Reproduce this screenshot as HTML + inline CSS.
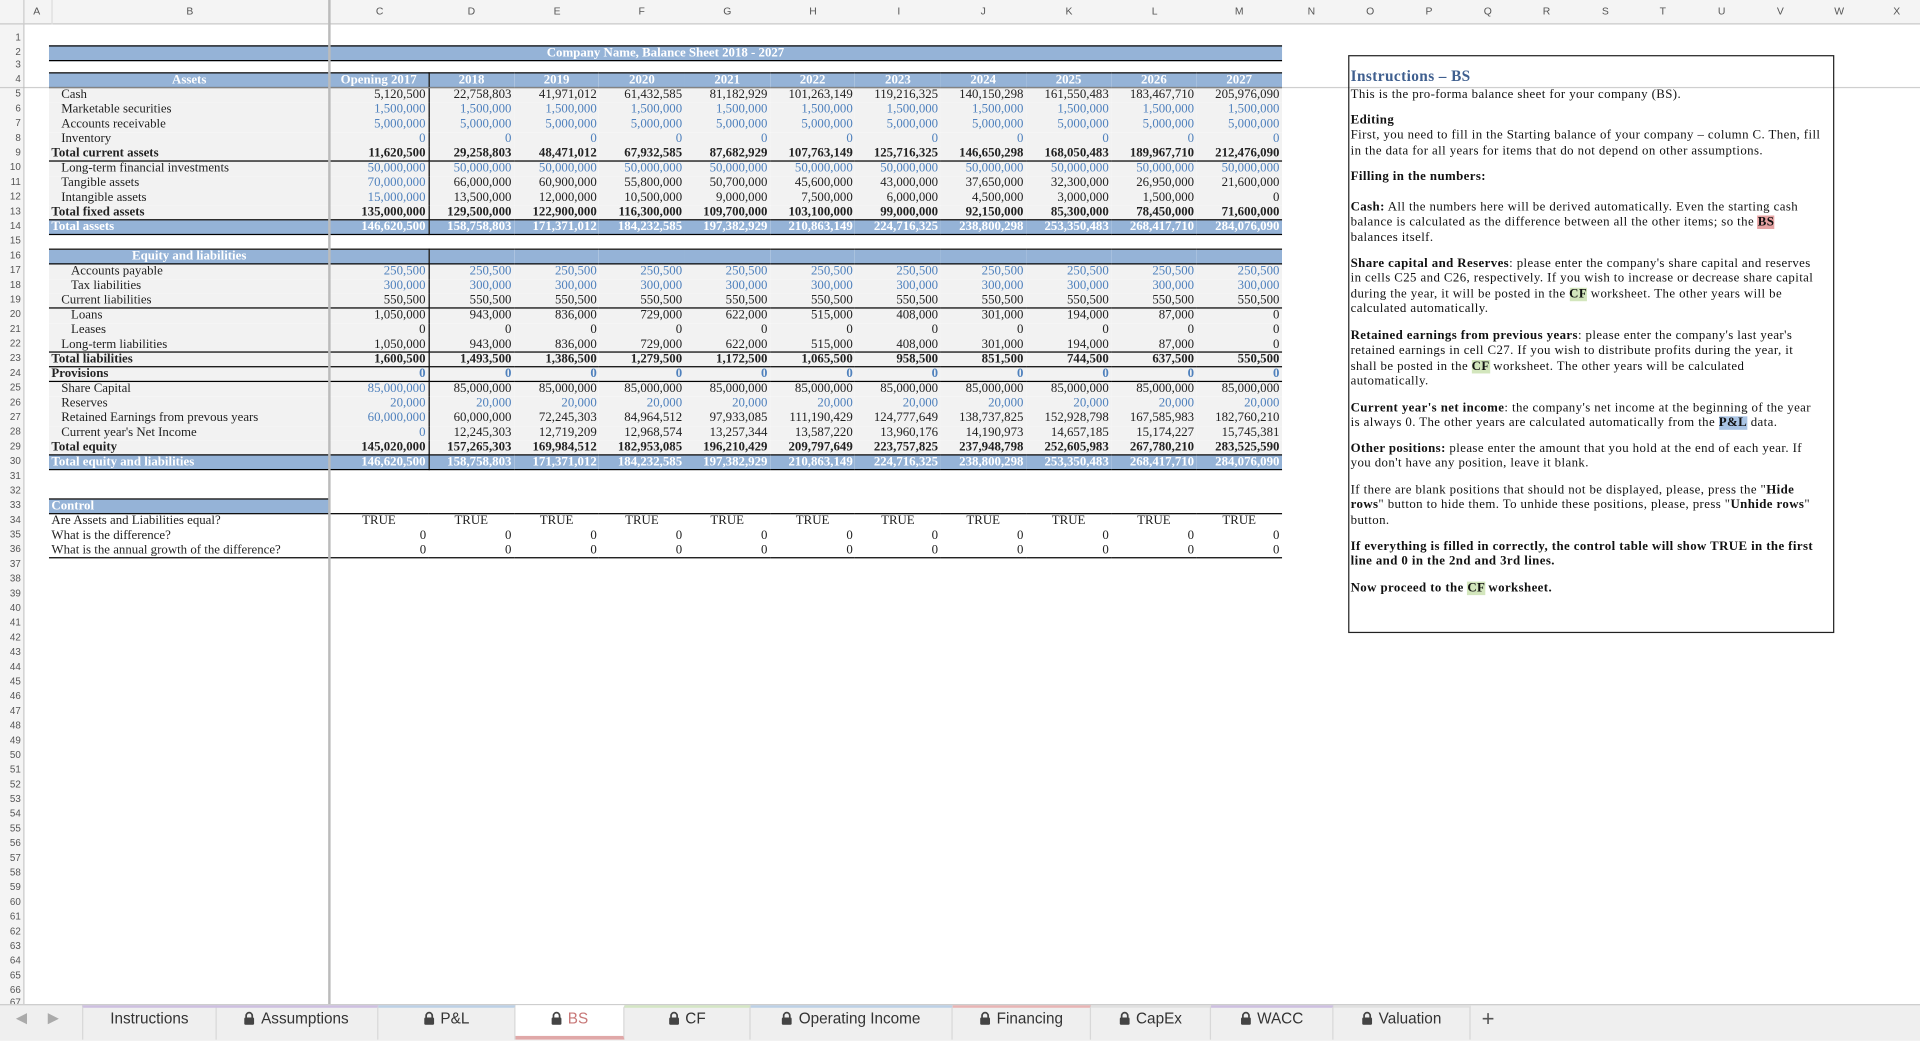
<!DOCTYPE html>
<html><head><meta charset="utf-8">
<style>
html,body{margin:0;padding:0;width:1920px;height:1039px;overflow:hidden;background:#fff}
#w{position:absolute;left:0;top:0;width:1568px;height:849px;transform:scale(1.22449);transform-origin:0 0;font-family:"Liberation Serif",serif;color:#222}
.ab{position:absolute}
#ch{left:0;top:0;width:1568px;height:19px;background:#f4f4f4;border-bottom:1px solid #c8c8c8;font:8.5px "Liberation Sans",sans-serif;color:#555;z-index:2}
#ch span{position:absolute;top:4px;transform:translateX(-50%)}
#rh{left:0;top:0;width:19px;height:820px;background:#f4f4f4;border-right:1px solid #c8c8c8;font:8px "Liberation Sans",sans-serif;color:#555}
#rh span{position:absolute;left:0;width:17px;text-align:right}
table{position:absolute;left:40px;top:59px;border-collapse:collapse;table-layout:fixed;font-size:10.5px}
tr{height:12px}
td{box-sizing:border-box;height:12px;padding:0 2px;line-height:11px;white-space:nowrap;overflow:hidden;text-align:right}
td:first-child{text-align:left}
tr.d td{background:#f2f2f2}
tr.h td{background:#95b3d7;color:#fff;font-weight:bold;text-align:center}
tr.band td{background:#95b3d7;color:#fff;font-weight:bold}
tr.t td{font-weight:bold}
tr.bb td{border-bottom:1px solid #000}
tr.bt td{border-top:1px solid #000}
td.c{border-right:1px solid #000}
.b{color:#4f81bd}
.i1{padding-left:10px!important}.i2{padding-left:18px!important}
tr.e td{background:transparent}
#ins{left:1101px;top:45px;width:395px;height:470px;border:1.5px solid #222;font-size:10.5px;letter-spacing:0.33px;line-height:12.3px;color:#111}
#ins p{margin:0;position:absolute;left:1px;white-space:nowrap}
.g{background:#d3e6bd}.r{background:#e6a3a3}.bl{background:#a9c4e4}
#tabs{left:0;top:820px;width:1568px;height:29px;background:#efefef;border-top:1px solid #ccc;font:12.5px "Liberation Sans",sans-serif;color:#333}
.tab{position:absolute;top:0;height:26px;line-height:19px;text-align:center;border-right:1px solid #d8d8d8;border-top:2px solid}
.tab svg{vertical-align:-1px;margin-right:5px}
</style></head><body><div id="w">
<div id="rh" class="ab">
<span style="top:26px">1</span><span style="top:38px">2</span><span style="top:48px">3</span><span style="top:60px">4</span><span style="top:72px">5</span><span style="top:84px">6</span><span style="top:96px">7</span><span style="top:108px">8</span><span style="top:120px">9</span><span style="top:132px">10</span><span style="top:144px">11</span><span style="top:156px">12</span><span style="top:168px">13</span><span style="top:180px">14</span><span style="top:192px">15</span><span style="top:204px">16</span><span style="top:216px">17</span><span style="top:228px">18</span><span style="top:240px">19</span><span style="top:252px">20</span><span style="top:264px">21</span><span style="top:276px">22</span><span style="top:288px">23</span><span style="top:300px">24</span><span style="top:312px">25</span><span style="top:324px">26</span><span style="top:336px">27</span><span style="top:348px">28</span><span style="top:360px">29</span><span style="top:372px">30</span><span style="top:384px">31</span><span style="top:396px">32</span><span style="top:408px">33</span><span style="top:420px">34</span><span style="top:432px">35</span><span style="top:444px">36</span><span style="top:456px">37</span><span style="top:468px">38</span><span style="top:480px">39</span><span style="top:492px">40</span><span style="top:504px">41</span><span style="top:516px">42</span><span style="top:528px">43</span><span style="top:540px">44</span><span style="top:552px">45</span><span style="top:564px">46</span><span style="top:576px">47</span><span style="top:588px">48</span><span style="top:600px">49</span><span style="top:612px">50</span><span style="top:624px">51</span><span style="top:636px">52</span><span style="top:648px">53</span><span style="top:660px">54</span><span style="top:672px">55</span><span style="top:684px">56</span><span style="top:696px">57</span><span style="top:708px">58</span><span style="top:720px">59</span><span style="top:732px">60</span><span style="top:744px">61</span><span style="top:756px">62</span><span style="top:768px">63</span><span style="top:780px">64</span><span style="top:792px">65</span><span style="top:804px">66</span><span style="top:814px">67</span>
</div>
<div id="ch" class="ab">
<span style="left:30px">A</span><span style="left:155px">B</span><span style="left:310px">C</span><span style="left:385px">D</span><span style="left:455px">E</span><span style="left:524px">F</span><span style="left:594px">G</span><span style="left:664px">H</span><span style="left:734px">I</span><span style="left:803px">J</span><span style="left:873px">K</span><span style="left:943px">L</span><span style="left:1012px">M</span><span style="left:1071px">N</span><span style="left:1119px">O</span><span style="left:1167px">P</span><span style="left:1215px">Q</span><span style="left:1263px">R</span><span style="left:1311px">S</span><span style="left:1358px">T</span><span style="left:1406px">U</span><span style="left:1454px">V</span><span style="left:1502px">W</span><span style="left:1549px">X</span>
</div>
<div class="ab" style="left:19px;top:0;width:1px;height:20px;background:#ccc;z-index:3"></div>
<div class="ab" style="left:42px;top:0;width:1px;height:20px;background:#ddd;z-index:3"></div>
<div class="ab" style="left:268px;top:0;width:2px;height:820px;background:#bbb;z-index:3"></div>
<div class="ab" style="left:40px;top:37px;width:1007px;height:11px;background:#95b3d7;border-top:1px solid #000;border-bottom:1px solid #000;color:#fff;font-weight:bold;font-size:10.5px;line-height:11px;text-align:center">Company Name, Balance Sheet 2018 - 2027</div>
<table>
<colgroup><col style="width:229px"><col style="width:81px"><col style="width:69.7px"><col style="width:69.7px"><col style="width:69.7px"><col style="width:69.7px"><col style="width:69.7px"><col style="width:69.7px"><col style="width:69.7px"><col style="width:69.7px"><col style="width:69.7px"><col style="width:69.7px"></colgroup>
<tr class="h bt bb"><td style="text-align:center">Assets</td><td class="c">Opening 2017</td><td>2018</td><td>2019</td><td>2020</td><td>2021</td><td>2022</td><td>2023</td><td>2024</td><td>2025</td><td>2026</td><td>2027</td></tr>
<tr class="d"><td class="i1">Cash</td><td class="c">5,120,500</td><td>22,758,803</td><td>41,971,012</td><td>61,432,585</td><td>81,182,929</td><td>101,263,149</td><td>119,216,325</td><td>140,150,298</td><td>161,550,483</td><td>183,467,710</td><td>205,976,090</td></tr>
<tr class="d b"><td class="i1" style="color:#222">Marketable securities</td><td class="c">1,500,000</td><td>1,500,000</td><td>1,500,000</td><td>1,500,000</td><td>1,500,000</td><td>1,500,000</td><td>1,500,000</td><td>1,500,000</td><td>1,500,000</td><td>1,500,000</td><td>1,500,000</td></tr>
<tr class="d b"><td class="i1" style="color:#222">Accounts receivable</td><td class="c">5,000,000</td><td>5,000,000</td><td>5,000,000</td><td>5,000,000</td><td>5,000,000</td><td>5,000,000</td><td>5,000,000</td><td>5,000,000</td><td>5,000,000</td><td>5,000,000</td><td>5,000,000</td></tr>
<tr class="d b"><td class="i1" style="color:#222">Inventory</td><td class="c">0</td><td>0</td><td>0</td><td>0</td><td>0</td><td>0</td><td>0</td><td>0</td><td>0</td><td>0</td><td>0</td></tr>
<tr class="d t bb"><td>Total current assets</td><td class="c">11,620,500</td><td>29,258,803</td><td>48,471,012</td><td>67,932,585</td><td>87,682,929</td><td>107,763,149</td><td>125,716,325</td><td>146,650,298</td><td>168,050,483</td><td>189,967,710</td><td>212,476,090</td></tr>
<tr class="d b"><td class="i1" style="color:#222">Long-term financial investments</td><td class="c">50,000,000</td><td>50,000,000</td><td>50,000,000</td><td>50,000,000</td><td>50,000,000</td><td>50,000,000</td><td>50,000,000</td><td>50,000,000</td><td>50,000,000</td><td>50,000,000</td><td>50,000,000</td></tr>
<tr class="d"><td class="i1">Tangible assets</td><td class="c b">70,000,000</td><td>66,000,000</td><td>60,900,000</td><td>55,800,000</td><td>50,700,000</td><td>45,600,000</td><td>43,000,000</td><td>37,650,000</td><td>32,300,000</td><td>26,950,000</td><td>21,600,000</td></tr>
<tr class="d"><td class="i1">Intangible assets</td><td class="c b">15,000,000</td><td>13,500,000</td><td>12,000,000</td><td>10,500,000</td><td>9,000,000</td><td>7,500,000</td><td>6,000,000</td><td>4,500,000</td><td>3,000,000</td><td>1,500,000</td><td>0</td></tr>
<tr class="d t bb"><td>Total fixed assets</td><td class="c">135,000,000</td><td>129,500,000</td><td>122,900,000</td><td>116,300,000</td><td>109,700,000</td><td>103,100,000</td><td>99,000,000</td><td>92,150,000</td><td>85,300,000</td><td>78,450,000</td><td>71,600,000</td></tr>
<tr class="band bb"><td>Total assets</td><td class="c">146,620,500</td><td>158,758,803</td><td>171,371,012</td><td>184,232,585</td><td>197,382,929</td><td>210,863,149</td><td>224,716,325</td><td>238,800,298</td><td>253,350,483</td><td>268,417,710</td><td>284,076,090</td></tr>
<tr class="e bb"><td colspan="12"></td></tr>
<tr class="h bb"><td>Equity and liabilities</td><td class="c"></td><td></td><td></td><td></td><td></td><td></td><td></td><td></td><td></td><td></td><td></td></tr>
<tr class="d b"><td class="i2" style="color:#222">Accounts payable</td><td class="c">250,500</td><td>250,500</td><td>250,500</td><td>250,500</td><td>250,500</td><td>250,500</td><td>250,500</td><td>250,500</td><td>250,500</td><td>250,500</td><td>250,500</td></tr>
<tr class="d b"><td class="i2" style="color:#222">Tax liabilities</td><td class="c">300,000</td><td>300,000</td><td>300,000</td><td>300,000</td><td>300,000</td><td>300,000</td><td>300,000</td><td>300,000</td><td>300,000</td><td>300,000</td><td>300,000</td></tr>
<tr class="d bb"><td class="i1">Current liabilities</td><td class="c">550,500</td><td>550,500</td><td>550,500</td><td>550,500</td><td>550,500</td><td>550,500</td><td>550,500</td><td>550,500</td><td>550,500</td><td>550,500</td><td>550,500</td></tr>
<tr class="d"><td class="i2">Loans</td><td class="c">1,050,000</td><td>943,000</td><td>836,000</td><td>729,000</td><td>622,000</td><td>515,000</td><td>408,000</td><td>301,000</td><td>194,000</td><td>87,000</td><td>0</td></tr>
<tr class="d"><td class="i2">Leases</td><td class="c">0</td><td>0</td><td>0</td><td>0</td><td>0</td><td>0</td><td>0</td><td>0</td><td>0</td><td>0</td><td>0</td></tr>
<tr class="d bb"><td class="i1">Long-term liabilities</td><td class="c">1,050,000</td><td>943,000</td><td>836,000</td><td>729,000</td><td>622,000</td><td>515,000</td><td>408,000</td><td>301,000</td><td>194,000</td><td>87,000</td><td>0</td></tr>
<tr class="d t bb"><td>Total liabilities</td><td class="c">1,600,500</td><td>1,493,500</td><td>1,386,500</td><td>1,279,500</td><td>1,172,500</td><td>1,065,500</td><td>958,500</td><td>851,500</td><td>744,500</td><td>637,500</td><td>550,500</td></tr>
<tr class="d t bb b"><td style="color:#222">Provisions</td><td class="c">0</td><td>0</td><td>0</td><td>0</td><td>0</td><td>0</td><td>0</td><td>0</td><td>0</td><td>0</td><td>0</td></tr>
<tr class="d"><td class="i1">Share Capital</td><td class="c b">85,000,000</td><td>85,000,000</td><td>85,000,000</td><td>85,000,000</td><td>85,000,000</td><td>85,000,000</td><td>85,000,000</td><td>85,000,000</td><td>85,000,000</td><td>85,000,000</td><td>85,000,000</td></tr>
<tr class="d b"><td class="i1" style="color:#222">Reserves</td><td class="c">20,000</td><td>20,000</td><td>20,000</td><td>20,000</td><td>20,000</td><td>20,000</td><td>20,000</td><td>20,000</td><td>20,000</td><td>20,000</td><td>20,000</td></tr>
<tr class="d"><td class="i1">Retained Earnings from prevous years</td><td class="c b">60,000,000</td><td>60,000,000</td><td>72,245,303</td><td>84,964,512</td><td>97,933,085</td><td>111,190,429</td><td>124,777,649</td><td>138,737,825</td><td>152,928,798</td><td>167,585,983</td><td>182,760,210</td></tr>
<tr class="d"><td class="i1">Current year's Net Income</td><td class="c b">0</td><td>12,245,303</td><td>12,719,209</td><td>12,968,574</td><td>13,257,344</td><td>13,587,220</td><td>13,960,176</td><td>14,190,973</td><td>14,657,185</td><td>15,174,227</td><td>15,745,381</td></tr>
<tr class="d t bb"><td>Total equity</td><td class="c">145,020,000</td><td>157,265,303</td><td>169,984,512</td><td>182,953,085</td><td>196,210,429</td><td>209,797,649</td><td>223,757,825</td><td>237,948,798</td><td>252,605,983</td><td>267,780,210</td><td>283,525,590</td></tr>
<tr class="band bb"><td>Total equity and liabilities</td><td class="c">146,620,500</td><td>158,758,803</td><td>171,371,012</td><td>184,232,585</td><td>197,382,929</td><td>210,863,149</td><td>224,716,325</td><td>238,800,298</td><td>253,350,483</td><td>268,417,710</td><td>284,076,090</td></tr>
<tr class="e"><td colspan="12"></td></tr>
<tr class="e"><td colspan="12"></td></tr>
<tr class="e bb"><td style="background:#95b3d7;color:#fff;font-weight:bold;border-top:1px solid #000">Control</td><td colspan="11"></td></tr>
<tr><td>Are Assets and Liabilities equal?</td><td style="text-align:center">TRUE</td><td style="text-align:center">TRUE</td><td style="text-align:center">TRUE</td><td style="text-align:center">TRUE</td><td style="text-align:center">TRUE</td><td style="text-align:center">TRUE</td><td style="text-align:center">TRUE</td><td style="text-align:center">TRUE</td><td style="text-align:center">TRUE</td><td style="text-align:center">TRUE</td><td style="text-align:center">TRUE</td></tr>
<tr><td>What is the difference?</td><td>0</td><td>0</td><td>0</td><td>0</td><td>0</td><td>0</td><td>0</td><td>0</td><td>0</td><td>0</td><td>0</td></tr>
<tr class="bb"><td>What is the annual growth of the difference?</td><td>0</td><td>0</td><td>0</td><td>0</td><td>0</td><td>0</td><td>0</td><td>0</td><td>0</td><td>0</td><td>0</td></tr>
</table>
<div class="ab" style="left:0;top:71px;width:1568px;height:1px;background:#bbb;opacity:.7"></div>
<div id="ins" class="ab">
<p style="top:10px;font-size:12.5px;font-weight:bold;color:#3f5f8f">Instructions – BS</p>
<p style="top:26px">This is the pro-forma balance sheet for your company (BS).</p>
<p style="top:47px"><b>Editing</b><br>First, you need to fill in the Starting balance of your company – column C. Then, fill<br>in the data for all years for items that do not depend on other assumptions.</p>
<p style="top:93px"><b>Filling in the numbers:</b></p>
<p style="top:118px"><b>Cash:</b> All the numbers here will be derived automatically. Even the starting cash<br>balance is calculated as the difference between all the other items; so the <b class="r">BS</b><br>balances itself.</p>
<p style="top:164px"><b>Share capital and Reserves</b>: please enter the company's share capital and reserves<br>in cells C25 and C26, respectively. If you wish to increase or decrease share capital<br>during the year, it will be posted in the <b class="g">CF</b> worksheet. The other years will be<br>calculated automatically.</p>
<p style="top:223px"><b>Retained earnings from previous years</b>: please enter the company's last year's<br>retained earnings in cell C27. If you wish to distribute profits during the year, it<br>shall be posted in the <b class="g">CF</b> worksheet. The other years will be calculated<br>automatically.</p>
<p style="top:282px"><b>Current year's net income</b>: the company's net income at the beginning of the year<br>is always 0. The other years are calculated automatically from the <b class="bl">P&amp;L</b> data.</p>
<p style="top:315px"><b>Other positions:</b> please enter the amount that you hold at the end of each year. If<br>you don't have any position, leave it blank.</p>
<p style="top:349px">If there are blank positions that should not be displayed, please, press the "<b>Hide</b><br><b>rows</b>" button to hide them. To unhide these positions, please, press "<b>Unhide rows</b>"<br>button.</p>
<p style="top:395px"><b>If everything is filled in correctly, the control table will show TRUE in the first<br>line and 0 in the 2nd and 3rd lines.</b></p>
<p style="top:429px"><b>Now proceed to the <span class="g">CF</span> worksheet.</b></p>
</div>
<div id="tabs" class="ab">
<span class="ab" style="left:13px;top:3px;color:#aaa;font-size:12px">◀</span><span class="ab" style="left:39px;top:3px;color:#aaa;font-size:12px">▶</span>
<div class="tab" style="left:67px;width:108px;border-top-color:#cdbfe0;border-left:1px solid #d8d8d8">Instructions</div>
<div class="tab" style="left:176px;width:132px;border-top-color:#cdbfe0"><svg width="9" height="11" viewBox="0 0 9 11"><path d="M2 5V3.5a2.5 2.5 0 0 1 5 0V5" fill="none" stroke="#444" stroke-width="1.4"/><rect x="0.5" y="5" width="8" height="6" rx="1" fill="#444"/></svg>Assumptions</div>
<div class="tab" style="left:309px;width:111px;border-top-color:#bcd0e6"><svg width="9" height="11" viewBox="0 0 9 11"><path d="M2 5V3.5a2.5 2.5 0 0 1 5 0V5" fill="none" stroke="#444" stroke-width="1.4"/><rect x="0.5" y="5" width="8" height="6" rx="1" fill="#444"/></svg>P&amp;L</div>
<div class="tab" style="left:421px;width:88px;border-top-color:#fff;background:#fff;color:#c87878;height:23px;border-bottom:3px solid #e0a8a8"><svg width="9" height="11" viewBox="0 0 9 11"><path d="M2 5V3.5a2.5 2.5 0 0 1 5 0V5" fill="none" stroke="#444" stroke-width="1.4"/><rect x="0.5" y="5" width="8" height="6" rx="1" fill="#444"/></svg>BS</div>
<div class="tab" style="left:510px;width:102px;border-top-color:#d4e6c4"><svg width="9" height="11" viewBox="0 0 9 11"><path d="M2 5V3.5a2.5 2.5 0 0 1 5 0V5" fill="none" stroke="#444" stroke-width="1.4"/><rect x="0.5" y="5" width="8" height="6" rx="1" fill="#444"/></svg>CF</div>
<div class="tab" style="left:613px;width:164px;border-top-color:#bcd0e6"><svg width="9" height="11" viewBox="0 0 9 11"><path d="M2 5V3.5a2.5 2.5 0 0 1 5 0V5" fill="none" stroke="#444" stroke-width="1.4"/><rect x="0.5" y="5" width="8" height="6" rx="1" fill="#444"/></svg>Operating Income</div>
<div class="tab" style="left:778px;width:112px;border-top-color:#e8b4b4"><svg width="9" height="11" viewBox="0 0 9 11"><path d="M2 5V3.5a2.5 2.5 0 0 1 5 0V5" fill="none" stroke="#444" stroke-width="1.4"/><rect x="0.5" y="5" width="8" height="6" rx="1" fill="#444"/></svg>Financing</div>
<div class="tab" style="left:891px;width:97px;border-top-color:#e0e0e0"><svg width="9" height="11" viewBox="0 0 9 11"><path d="M2 5V3.5a2.5 2.5 0 0 1 5 0V5" fill="none" stroke="#444" stroke-width="1.4"/><rect x="0.5" y="5" width="8" height="6" rx="1" fill="#444"/></svg>CapEx</div>
<div class="tab" style="left:989px;width:99px;border-top-color:#cdbfe0"><svg width="9" height="11" viewBox="0 0 9 11"><path d="M2 5V3.5a2.5 2.5 0 0 1 5 0V5" fill="none" stroke="#444" stroke-width="1.4"/><rect x="0.5" y="5" width="8" height="6" rx="1" fill="#444"/></svg>WACC</div>
<div class="tab" style="left:1089px;width:111px;border-top-color:#e0e0e0"><svg width="9" height="11" viewBox="0 0 9 11"><path d="M2 5V3.5a2.5 2.5 0 0 1 5 0V5" fill="none" stroke="#444" stroke-width="1.4"/><rect x="0.5" y="5" width="8" height="6" rx="1" fill="#444"/></svg>Valuation</div>
<span class="ab" style="left:1210px;top:1px;font-size:18px;color:#555">+</span>
</div>
</div></body></html>
